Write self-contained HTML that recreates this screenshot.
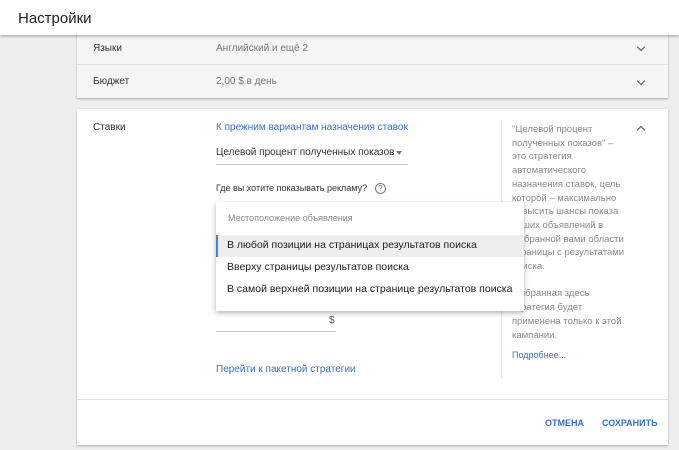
<!DOCTYPE html>
<html><head><meta charset="utf-8"><style>
body{margin:0;width:679px;height:450px;background:#eeeeee;font-family:"Liberation Sans",sans-serif;position:relative;overflow:hidden;color:#212121}
.a{position:absolute;white-space:nowrap}
.hdr{position:absolute;left:0;top:0;width:679px;height:35px;background:#fff;box-shadow:0 1px 3px rgba(0,0,0,.35);z-index:3}
.card{position:absolute;left:77px;width:591px;background:#f5f5f5;box-shadow:0 1px 2px rgba(0,0,0,.3)}
.s{font-size:10px}
.g{color:#757575}
.b{color:#3b6fc4}
.chev{position:absolute;width:5px;height:5px;border-right:1.5px solid #555;border-bottom:1.5px solid #555}
</style></head><body>
<div class="hdr"><div class="a" style="left:18px;top:10px;font-size:15px;color:#202020">Настройки</div></div>
<div class="card" style="top:30px;height:68px"></div>
<div class="a" style="left:77px;top:64px;width:591px;height:1px;background:#e0e0e0"></div>
<div class="a s" style="left:93px;top:43px;color:#333">Языки</div>
<div class="a s g" style="left:216px;top:43px">Английский и ещё 2</div>
<div class="chev" style="left:638px;top:44px;transform:rotate(45deg)"></div>
<div class="a s" style="left:93px;top:76px;color:#333">Бюджет</div>
<div class="a s g" style="left:216px;top:76px">2,00 $ в день</div>
<div class="chev" style="left:638px;top:78px;transform:rotate(45deg)"></div>

<div class="card" style="top:109px;height:336px;background:#fff"></div>
<div class="a" style="left:77px;top:399px;width:591px;height:1px;background:#e0e0e0"></div>
<div class="a" style="left:501px;top:120px;width:1px;height:258px;background:#e0e0e0"></div>
<div class="a s" style="left:93px;top:122px;color:#333">Ставки</div>
<div class="a s b" style="left:216px;top:122px">К прежним вариантам назначения ставок</div>
<div class="a s" style="left:216px;top:147px;color:#333">Целевой процент полученных показов</div>
<div class="a" style="left:396px;top:151px;border-left:3.5px solid transparent;border-right:3.5px solid transparent;border-top:4px solid #777"></div>
<div class="a" style="left:216px;top:164px;width:192px;height:1px;background:#ccc"></div>
<div class="a" style="left:216px;top:183px;font-size:9px;color:#333">Где вы хотите показывать рекламу?</div>
<div class="a" style="left:375px;top:183px;width:9px;height:9px;border:1px solid #777;border-radius:50%;font-size:8px;line-height:9px;text-align:center;color:#777">?</div>
<div class="chev" style="left:638px;top:127px;transform:rotate(-135deg)"></div>
<div class="a" style="left:512px;top:123px;font-size:9.5px;line-height:13.7px;color:#8a8a8a;white-space:normal;width:115px">"Целевой процент полученных показов" – это стратегия автоматического назначения ставок, цель которой – максимально повысить шансы показа ваших объявлений в выбранной вами области страницы с результатами поиска.<br><br>Выбранная здесь стратегия будет применена только к этой кампании.</div>
<div class="a b" style="left:512px;top:350px;font-size:9px">Подробнее...</div>
<div class="a" style="left:329px;top:315px;font-size:10px;color:#555">$</div>
<div class="a" style="left:216px;top:331px;width:120px;height:1px;background:#ccc"></div>
<div class="a s b" style="left:216px;top:364px">Перейти к пакетной стратегии</div>
<div class="a b" style="left:545px;top:418px;font-size:9px;font-weight:bold">ОТМЕНА</div>
<div class="a b" style="left:602px;top:418px;font-size:9px;font-weight:bold">СОХРАНИТЬ</div>

<div class="a" style="left:216px;top:202px;width:308px;height:109px;background:#fff;box-shadow:0 2px 5px rgba(0,0,0,.3)">
<div class="a" style="left:12px;top:11px;font-size:9px;color:#888">Местоположение объявления</div>
<div class="a" style="left:0;top:33px;width:308px;height:22px;background:#eeeeee"></div>
<div class="a" style="left:0;top:33px;width:2px;height:22px;background:#4a7fe0"></div>
<div class="a" style="left:11px;top:37px;font-size:10.5px">В любой позиции на страницах результатов поиска</div>
<div class="a" style="left:11px;top:59px;font-size:10.5px">Вверху страницы результатов поиска</div>
<div class="a" style="left:11px;top:81px;font-size:10.5px">В самой верхней позиции на странице результатов поиска</div>
</div>
</body></html>
